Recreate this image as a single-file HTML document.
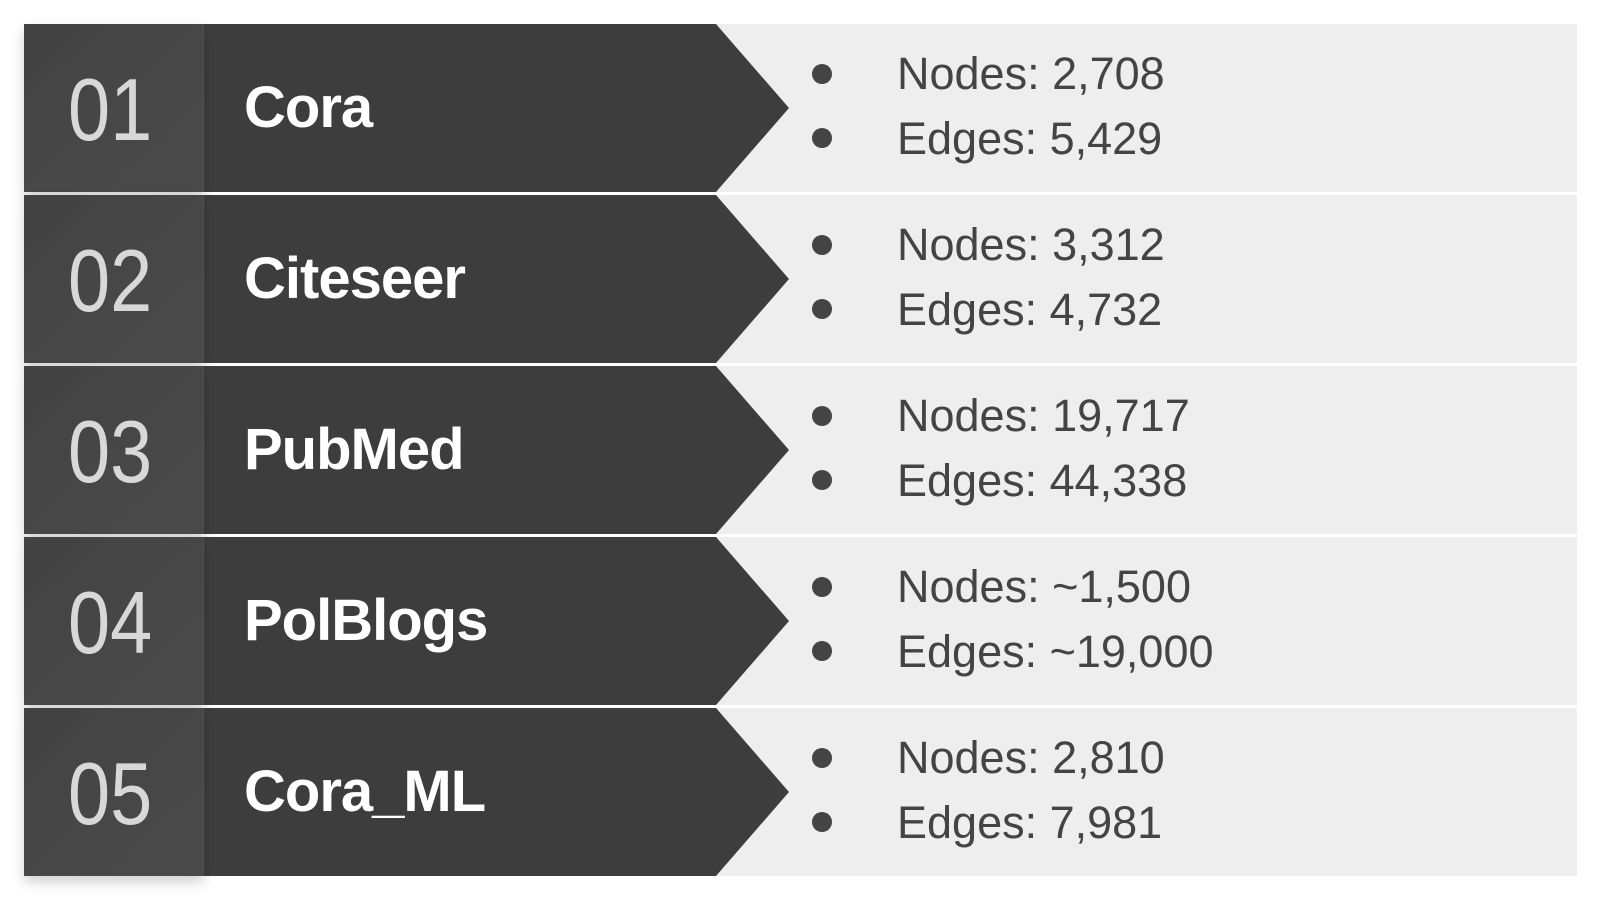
<!DOCTYPE html>
<html><head><meta charset="utf-8"><style>
html,body{margin:0;padding:0;background:#fff;width:1608px;height:898px;overflow:hidden}
svg{display:block}
text{font-family:"Liberation Sans",sans-serif}
.n{font-size:88px;fill:#d8d8d8}
.t{font-size:58px;font-weight:bold;fill:#fff;letter-spacing:-1px}
.b{font-size:45px;fill:#444}
</style></head><body>
<svg width="1608" height="898" viewBox="0 0 1608 898" xmlns="http://www.w3.org/2000/svg">
<defs>
<linearGradient id="g" x1="0" y1="0" x2="1" y2="1">
<stop offset="0" stop-color="#424242"/><stop offset="1" stop-color="#4a4a4a"/>
</linearGradient>
<filter id="s" x="-10%" y="-10%" width="120%" height="130%"><feDropShadow dx="0" dy="6" stdDeviation="6" flood-color="#000" flood-opacity="0.18"/></filter>
<g id="base">
<rect x="24" y="0" width="1553" height="168" fill="#eeeeee"/>
<path d="M204 0H716L789 84L716 168H204Z" fill="#3d3d3d"/>
<rect x="24" y="0" width="180" height="168" fill="url(#g)" filter="url(#s)"/>
<rect x="203" y="0" width="1" height="168" fill="#505050"/>
<circle cx="822" cy="50" r="10" fill="#444"/><circle cx="822" cy="114" r="10" fill="#444"/>
</g>
</defs>
<g transform="translate(0,24)">
<use href="#base"/>
<text class="n" transform="translate(68,116) scale(0.86,1)">01</text>
<text x="244" y="103" class="t">Cora</text>
<text x="897" y="65" class="b">Nodes: 2,708</text>
<text x="897" y="130" class="b">Edges: 5,429</text>
</g>
<g transform="translate(0,195)">
<use href="#base"/>
<text class="n" transform="translate(68,116) scale(0.86,1)">02</text>
<text x="244" y="103" class="t">Citeseer</text>
<text x="897" y="65" class="b">Nodes: 3,312</text>
<text x="897" y="130" class="b">Edges: 4,732</text>
</g>
<g transform="translate(0,366)">
<use href="#base"/>
<text class="n" transform="translate(68,116) scale(0.86,1)">03</text>
<text x="244" y="103" class="t">PubMed</text>
<text x="897" y="65" class="b">Nodes: 19,717</text>
<text x="897" y="130" class="b">Edges: 44,338</text>
</g>
<g transform="translate(0,537)">
<use href="#base"/>
<text class="n" transform="translate(68,116) scale(0.86,1)">04</text>
<text x="244" y="103" class="t">PolBlogs</text>
<text x="897" y="65" class="b">Nodes: ~1,500</text>
<text x="897" y="130" class="b">Edges: ~19,000</text>
</g>
<g transform="translate(0,708)">
<use href="#base"/>
<text class="n" transform="translate(68,116) scale(0.86,1)">05</text>
<text x="244" y="103" class="t">Cora_ML</text>
<text x="897" y="65" class="b">Nodes: 2,810</text>
<text x="897" y="130" class="b">Edges: 7,981</text>
</g>
</svg>
</body></html>
